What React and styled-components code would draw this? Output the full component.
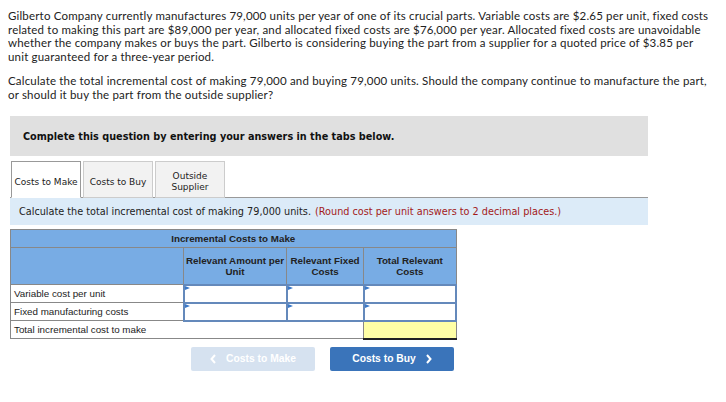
import React from 'react'
import styled, { createGlobalStyle } from 'styled-components'

const Global = createGlobalStyle`
  body { margin: 0; background: #fff; }
  * { box-sizing: border-box; }
`

const Page = styled.div`
  padding: 9px 8px 0 8px;
  width: 726px;
`

const Para = styled.p`
  margin: 0 0 10px 0;
  font-family: Lato, "Liberation Sans", sans-serif;
  font-size: 11.5px;
  letter-spacing: 0.18px;
  line-height: 13.7px;
  color: #222;
  white-space: nowrap;
`

const Instruction = styled.div`
  margin: 15px 0 0 2px;
  width: 638px;
  height: 40px;
  background: #e0e0e0;
  display: flex;
  align-items: center;
  padding-left: 13px;
  font-family: "DejaVu Sans", Verdana, sans-serif;
  font-weight: bold;
  font-size: 9.7px;
  color: #111;
`

const Tabs = styled.div`
  margin: 5px 0 0 3px;
  display: flex;
  gap: 2px;
  height: 36px;
`

const Tab = styled.div`
  width: 70px;
  display: flex;
  align-items: center;
  justify-content: center;
  text-align: center;
  padding-top: 5px;
  font-family: "DejaVu Sans", Verdana, sans-serif;
  font-size: 9px;
  line-height: 11px;
  color: #222;
  background: ${p => (p.active ? '#fff' : '#f2f2f2')};
  border: 1px solid ${p => (p.active ? '#999' : '#ccc')};
  border-bottom: ${p => (p.active ? '1px solid #fff' : '1px solid #ccc')};
  position: relative;
  z-index: 1;
  margin-bottom: -1px;
`

const Band = styled.div`
  margin-left: 2px;
  width: 638px;
  height: 28px;
  border-top: 1px solid #999;
  background: #dcebf8;
  display: flex;
  align-items: center;
  padding-left: 9px;
  font-family: "DejaVu Sans", Verdana, sans-serif;
  font-size: 9.7px;
  color: #222;
  white-space: nowrap;
`

const Note = styled.span`
  color: #a31a1a;
  margin-left: 4px;
`

const Table = styled.table`
  margin: 4px 0 0 2px;
  border-collapse: collapse;
  width: 447px;
  font-family: "Liberation Sans", Arial, sans-serif;
  font-size: 9.8px;
  color: #222;
  td, th {
    border: 1px solid #888;
    padding: 0;
  }
`

const Head = styled.th`
  background: #78ace4;
  font-weight: bold;
  height: ${p => p.h}px;
  text-align: center;
  vertical-align: ${p => (p.top ? 'top' : 'middle')};
  padding-top: ${p => (p.top ? '7px' : '0')} !important;
  line-height: 11px;
  width: ${p => p.w || 'auto'};
`

const Label = styled.td`
  height: 18px;
  padding-left: 3px !important;
  background: #fff;
  white-space: nowrap;
`

const InputCell = styled.td`
  background: #fff;
  height: ${p => p.h || 18}px;
  border: 2px solid #6489bb !important;
  position: relative;
  &::before {
    content: '';
    position: absolute;
    left: 0;
    top: 0;
    border-top: 2.5px solid transparent;
    border-bottom: 2.5px solid transparent;
    border-left: 5px solid #3a78c8;
  }
`

const Yellow = styled.td`
  background: #ffffa6;
  border-bottom: 2px solid #222 !important;
`

const Nav = styled.div`
  margin: 7px 0 0 183px;
  display: flex;
  gap: 15px;
`

const NavButton = styled.div`
  width: 124px;
  height: 24px;
  border-radius: 2px;
  display: flex;
  align-items: center;
  justify-content: center;
  gap: 10px;
  font-family: "Liberation Sans", Arial, sans-serif;
  font-weight: bold;
  font-size: 10.3px;
  color: #fff;
  background: ${p => (p.disabled ? '#d6e2f0' : '#3a74ba')};
`

const Chevron = ({ dir }) => (
  <svg width="6" height="10" viewBox="0 0 6 10">
    <path
      d={dir === 'left' ? 'M5 1 L1.5 5 L5 9' : 'M1 1 L4.5 5 L1 9'}
      fill="none"
      stroke="#fff"
      strokeWidth="2"
    />
  </svg>
)

export default function App() {
  return (
    <>
      <Global />
      <Page>
        <Para>
          Gilberto Company currently manufactures 79,000 units per year of one of its crucial parts. Variable costs are $2.65 per unit, fixed costs<br />
          related to making this part are $89,000 per year, and allocated fixed costs are $76,000 per year. Allocated fixed costs are unavoidable<br />
          whether the company makes or buys the part. Gilberto is considering buying the part from a supplier for a quoted price of $3.85 per<br />
          unit guaranteed for a three-year period.
        </Para>
        <Para>
          Calculate the total incremental cost of making 79,000 and buying 79,000 units. Should the company continue to manufacture the part,<br />
          or should it buy the part from the outside supplier?
        </Para>
        <Instruction>Complete this question by entering your answers in the tabs below.</Instruction>
        <Tabs>
          <Tab active>Costs to Make</Tab>
          <Tab>Costs to Buy</Tab>
          <Tab>Outside<br />Supplier</Tab>
        </Tabs>
        <Band>
          Calculate the total incremental cost of making 79,000 units.
          <Note>(Round cost per unit answers to 2 decimal places.)</Note>
        </Band>
        <Table>
          <thead>
            <tr>
              <Head colSpan={4} h={18}>Incremental Costs to Make</Head>
            </tr>
            <tr>
              <Head h={37} top w="173px"></Head>
              <Head h={37} top w="103px">Relevant Amount per<br />Unit</Head>
              <Head h={37} top w="77px">Relevant Fixed<br />Costs</Head>
              <Head h={37} top>Total Relevant<br />Costs</Head>
            </tr>
          </thead>
          <tbody>
            <tr>
              <Label>Variable cost per unit</Label>
              <InputCell />
              <InputCell />
              <InputCell />
            </tr>
            <tr>
              <Label>Fixed manufacturing costs</Label>
              <InputCell />
              <InputCell />
              <InputCell />
            </tr>
            <tr>
              <Label colSpan={3}>Total incremental cost to make</Label>
              <Yellow />
            </tr>
          </tbody>
        </Table>
        <Nav>
          <NavButton disabled>
            <Chevron dir="left" />
            Costs to Make
          </NavButton>
          <NavButton>
            Costs to Buy
            <Chevron dir="right" />
          </NavButton>
        </Nav>
      </Page>
    </>
  )
}
